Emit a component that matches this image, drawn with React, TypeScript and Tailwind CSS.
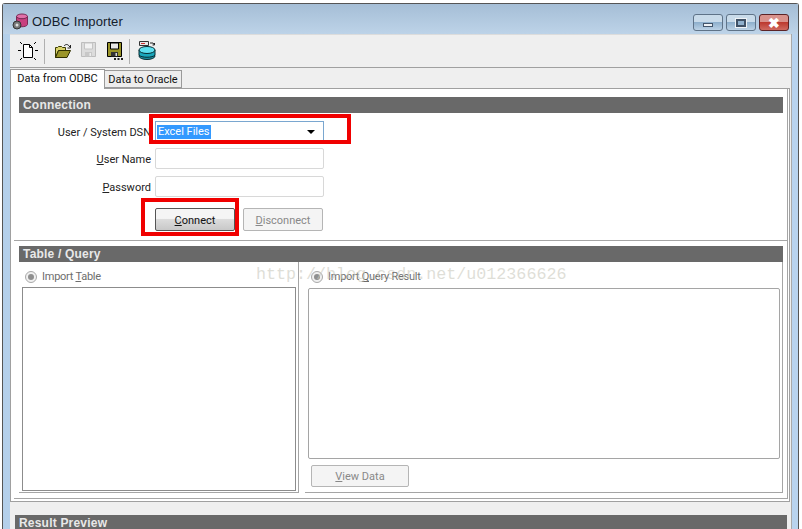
import React from 'react';

const font = { fontFamily: '"Liberation Sans", Arial, sans-serif' };

const SectionHeader = ({ title, className = '' }: { title: string; className?: string }) => (
	<div className={`h-4 bg-[#696969] text-[#e8e8e8] text-[12px] leading-4 font-bold pl-1 tracking-[0.2px] ${className}`}>
		{title}
	</div>
);

const Radio = ({ u, rest, before = '' }: { before?: string; u: string; rest: string }) => (
	<div className="flex items-center gap-[5px] font-['Roboto'] text-[11px] leading-4 text-[#6d6d6d] tracking-[-0.25px]">
		<span className="w-3 h-3 rounded-full border border-[#a9a9a9] bg-[#f0f0f0] flex items-center justify-center">
			<span className="w-[6px] h-[6px] rounded-full bg-[#8f8f8f]" />
		</span>
		<span>
			{before}
			<u>{u}</u>
			{rest}
		</span>
	</div>
);

const Field = ({ children, u, rest }: { children: React.ReactNode; u: string; rest: string }) => (
	<div className="flex items-center gap-1">
		<label className="w-[137px] pt-[3px] text-right font-['Roboto'] text-[11px] text-[#222] whitespace-nowrap">
			<u>{u}</u>
			{rest}
		</label>
		{children}
	</div>
);

const NewIcon = () => (
	<svg width="20" height="20" viewBox="0 0 20 20" fill="none" stroke="#000" strokeWidth="1">
		<path d="M5.500 3.500h6l3 3v10h-9z" fill="#fff" />
		<path d="M11.500 3.500v3h3" />
		<path d="M2 1l2 2M18 1l-2 2M0 9.500h3M17 9.500h3M2 19l2-2M18 19l-2-2" />
	</svg>
);

const OpenIcon = () => (
	<svg width="18" height="16" viewBox="0 0 18 16">
		<path d="M1.500 14.500V4.500h2l1-1h3l1 1h3v3h-7l-3 7z" fill="#d8d26a" stroke="#3a3a00" />
		<path d="M1.500 14.500l3-7h12l-3.500 7z" fill="#9a9428" stroke="#2f2f00" />
		<path d="M10 3c1.500-2 4-2 5 0l1 1" fill="none" stroke="#222" />
		<path d="M16.500 2v3h-3" fill="none" stroke="#222" />
	</svg>
);

const SaveIcon = ({ on }: { on: boolean }) => (
	<svg width="16" height="18" viewBox="0 0 16 18">
		<path d="M.5.5h14v14H.5z" fill={on ? '#9a9428' : '#dcdcdc'} stroke={on ? '#000' : '#bdbdbd'} />
		<path d="M3.500 1v6h8V1z" fill={on ? '#e8e8e8' : '#f2f2f2'} stroke={on ? '#000' : '#c4c4c4'} />
		<path d="M4 10h7v4.500H4z" fill={on ? '#333' : '#c8c8c8'} />
		<path d="M8.500 11h1.500v3H8.500z" fill={on ? '#ddd' : '#eee'} />
		{on && <path d="M7 16h2v2H7zM10.500 16h2v2h-2zM14 16h2v2h-2z" fill="#222" />}
	</svg>
);

const DbIcon = () => (
	<svg width="18" height="20" viewBox="0 0 18 20">
		<path d="M1.500.5h9v4h-9z" fill="#e8e8e8" stroke="#333" />
		<path d="M3 2h4v1H3z" fill="#c33" />
		<path d="M12 2h3l1.500 2M16.500 2v2h-2" fill="none" stroke="#222" />
		<ellipse cx="9" cy="15" rx="8" ry="3.500" fill="#1d8fa0" stroke="#062c33" />
		<path d="M1 9v5c2 3 14 3 16 0V9z" fill="#1aa6bb" stroke="#062c33" />
		<ellipse cx="9" cy="9" rx="8" ry="3.500" fill="#5ee0f0" stroke="#062c33" />
	</svg>
);

const WinButton = ({ className, children }: { className: string; children: React.ReactNode }) => (
	<div className={`h-[17px] rounded-[3px] border flex items-center justify-center ${className}`}>{children}</div>
);

export default function App() {
	return (
		<div className="w-[802px] h-[529px] overflow-hidden bg-white relative pt-[3px] pl-[2px] pr-[3px]" style={font}>
			<div className="h-[560px] border border-[#555] border-b-0 rounded-t-[3px] bg-[linear-gradient(to_right,#b4d0eb,#c4d8ea_50%,#b9d3ee)]">
				{/* Title bar */}
				<div className="h-[30px] pl-[9px] pr-[9px] flex bg-[linear-gradient(to_bottom,#a5bed6,#bdd3e8)]">
					<div className="flex items-center gap-[3px] h-[30px] pt-[5px]">
						<svg width="17" height="17" viewBox="0 0 17 17">
							<ellipse cx="10" cy="3.500" rx="5.500" ry="2.500" fill="#e070a8" stroke="#7a2b55" />
							<path d="M4.500 3.500v8c1 3 10 3 11 0v-8c-1 3-10 3-11 0z" fill="#c8407f" stroke="#7a2b55" />
							<circle cx="5" cy="12" r="4" fill="#777" stroke="#333" />
							<circle cx="5" cy="12" r="1.500" fill="#ddd" />
						</svg>
						<span className="text-[13px] text-[#14202c] tracking-[0.1px]">ODBC Importer</span>
					</div>
					<div className="ml-auto flex gap-[3px] pt-[10px]">
						<WinButton className="w-[30px] border-[#5f7388] bg-[linear-gradient(to_bottom,#c9dbea_45%,#8fb0cd_50%,#bcd2e6)]">
							<span className="w-[10px] h-1 mt-1 bg-[#eef2f6] border border-[#44566b]" />
						</WinButton>
						<WinButton className="w-[30px] border-[#5f7388] bg-[linear-gradient(to_bottom,#c9dbea_45%,#8fb0cd_50%,#bcd2e6)]">
							<span className="w-[10px] h-2 bg-[#8fb0cd] border-2 border-[#3f5166] outline outline-[#eef2f6]" />
						</WinButton>
						<WinButton className="w-[30px] border-[#5c2326] bg-[linear-gradient(to_bottom,#d9928c_45%,#bd3a30_50%,#cf6a60)]">
							<span className="text-white font-bold text-[14px] leading-none">✖</span>
						</WinButton>
					</div>
				</div>

				{/* Client area */}
				<div className="ml-[7px] mr-[6px] h-[520px] bg-[#efefef] border-r border-[#a9a9a9]">
					{/* Toolbar */}
					<div className="h-[34px] border-b border-[#a0a0a0] flex items-center pl-2 border-t border-t-[#dcdcdc]">
						<NewIcon />
						<div className="w-px h-[25px] bg-[#b0b0b0] ml-[6px]" />
						<div className="ml-[9px]"><OpenIcon /></div>
						<div className="ml-[9px]"><SaveIcon on={false} /></div>
						<div className="ml-[10px]"><SaveIcon on /></div>
						<div className="w-px h-[25px] bg-[#b0b0b0] ml-[6px]" />
						<div className="ml-[8px]"><DbIcon /></div>
					</div>

					{/* Tabs */}
					<div className="h-[20px] flex items-end font-['Roboto']">
						<div className="h-[20px] w-[95px] bg-white border border-[#9a9a9a] border-b-0 text-[11px] leading-[17px] text-center text-[#111] relative z-10 -mb-px">
							Data from ODBC
						</div>
						<div className="h-[18px] w-[77px] bg-[#ededed] border border-[#9a9a9a] border-l-0 text-[11px] leading-[17px] text-center text-[#111]">
							Data to Oracle
						</div>
					</div>

					{/* Tab page */}
					<div className="h-[414px] bg-white border border-[#a0a0a0] mr-[1px] pl-[3px] pr-px">
						<div className="h-[410px] border-b border-r border-[#a5a5a5]">
							{/* Connection */}
							<div className="h-[152px] border-b border-[#a5a5a5] pt-2">
								<SectionHeader title="Connection" className="ml-[5px] mr-1" />
								<div className="flex flex-col pt-[9px]">
									<Field u="" rest="User / System DSN">
										<div className="w-[169px] h-[21px] border-t border-x border-[#7aa7d0] flex items-center justify-between pl-px pr-2 font-['Roboto'] text-[11px] -mt-px">
											<span className="bg-[#3399ff] text-white px-px leading-[14px]">Excel Files</span>
											<span className="w-0 h-0 border-x-[4px] border-x-transparent border-t-[4px] border-t-black" />
										</div>
									</Field>
									<div className="h-[6px]" />
									<Field u="U" rest="ser Name">
										<div className="w-[169px] h-[21px] rounded-[2px] border border-[#d8d8d8]" />
									</Field>
									<div className="h-[7px]" />
									<Field u="P" rest="assword">
										<div className="w-[169px] h-[21px] rounded-[2px] border border-[#d8d8d8]" />
									</Field>
									<div className="flex gap-2 pl-[141px] pt-[11px] font-['Roboto']">
										<div className="w-[80px] h-[23px] rounded-[2px] border border-[#555] bg-[linear-gradient(to_bottom,#f5f5f5_45%,#dcdcdc_50%,#c8c8c8)] text-[11px] leading-[23px] text-center text-[#111]">
											<u>C</u>onnect
										</div>
										<div className="w-[80px] h-[23px] rounded-[2px] border border-[#b5b5b5] bg-[#f4f4f4] text-[11px] leading-[23px] text-center text-[#888]">
											<u>D</u>isconnect
										</div>
									</div>
								</div>
							</div>

							{/* Table / Query */}
							<div className="pt-[5px] flex flex-col">
								<SectionHeader title="Table / Query" className="ml-[5px] mr-1" />
								<div className="flex h-[231px]">
									<div className="w-[280px] ml-[5px] border-r border-b border-[#a5a5a5] pt-[7px] pl-[6px] pr-[2px]">
										<Radio u="T" before="Import " rest="able" />
										<div className="h-[204px] mt-[2px] -ml-[3px] border border-[#8c8c8c]" />
									</div>
									<div className="w-[478px] ml-[6px] border-b border-r border-[#a5a5a5] pt-[7px] pl-[6px]">
										<Radio u="Q" before="Import " rest="uery Result" />
										<div className="h-[171px] mt-[3px] -ml-[3px] mr-[2px] border border-[#a5a5a5] rounded-[2px]" />
										<div className="w-[98px] h-[22px] mt-[6px] rounded-[2px] border border-[#b5b5b5] bg-[#f4f4f4] font-['Roboto'] text-[11px] leading-[21px] text-center text-[#888]">
											<u>V</u>iew Data
										</div>
									</div>
								</div>
							</div>
						</div>
					</div>

					{/* Result preview */}
					<div className="pt-[13px] pl-[5px] pr-[4px]">
						<SectionHeader title="Result Preview" />
					</div>
				</div>
			</div>

			{/* Red annotations drawn over the screenshot */}
			<div className="absolute left-[149px] top-[114px] w-[202px] h-[30px] border-[4px] border-[#f00000]" />
			<div className="absolute left-[141px] top-[198px] w-[98px] h-[38px] border-[4px] border-[#f00000]" />

			{/* Blog watermark */}
			<div className="absolute left-[256px] top-[264px] text-[16.7px] leading-[22px] text-[#c9c9bd]/60 whitespace-nowrap" style={{ fontFamily: '"Liberation Mono", monospace' }}>
				http://blog.csdn.net/u012366626
			</div>
		</div>
	);
}
